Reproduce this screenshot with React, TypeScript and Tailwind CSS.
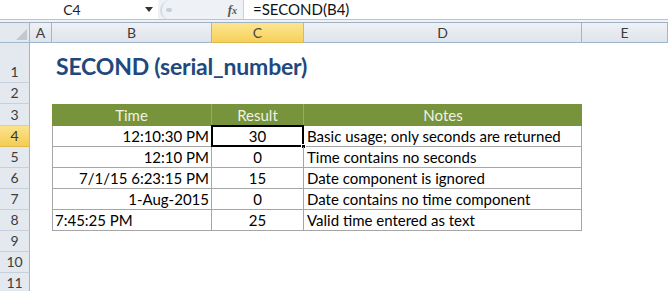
import React from 'react'

// Excel 2010 style sheet: SECOND function example

const cols = [
  { key: 'A', w: 'w-[22px]' },
  { key: 'B', w: 'w-[160px]' },
  { key: 'C', w: 'w-[92px]' },
  { key: 'D', w: 'w-[278px]' },
  { key: 'E', w: 'w-[86px]' },
]

const rows = [
  { time: '12:10:30 PM', result: '30', note: 'Basic usage; only seconds are returned', left: false },
  { time: '12:10 PM', result: '0', note: 'Time contains no seconds', left: false },
  { time: '7/1/15 6:23:15 PM', result: '15', note: 'Date component is ignored', left: false },
  { time: '1-Aug-2015', result: '0', note: 'Date contains no time component', left: false },
  { time: '7:45:25 PM', result: '25', note: 'Valid time entered as text', left: true },
]

function RowHead({ n, h = 'h-[21px]', active = false }: { n: number; h?: string; active?: boolean }) {
  return (
    <div
      className={`${h} w-[30px] shrink-0 flex items-end justify-center pb-[1px] border-b border-r text-[14px] leading-[18px] ${
        active
          ? 'bg-gradient-to-b from-[#fbe38c] to-[#f5cc52] border-b-[#e0b850] border-r-[#e0b850] text-[#333]'
          : 'bg-[#e4e9f0] border-b-[#c6cfda] border-r-[#9eb6ce] text-[#3c3c3c]'
      }`}
    >
      {n}
    </div>
  )
}

export default function App() {
  return (
    <div className="w-[668px] h-[291px] overflow-hidden bg-white font-['Lato',sans-serif] text-black">
      {/* Formula bar */}
      <div className="flex h-[20px] border-b border-[#b8c4d2]">
        <div className="w-[140px] bg-white flex items-center justify-center pl-[4px] text-[14px] text-[#222]">C4</div>
        <div className="w-[18px] bg-white flex items-center justify-center">
          <svg width="8" height="5" viewBox="0 0 8 5">
            <path d="M0 0 L8 0 L4 5 Z" fill="#333" />
          </svg>
        </div>
        <div className="w-[85px] bg-[#eef1f5] flex items-center">
          <div className="ml-[2px] w-[16px] h-[20px] rounded-l-full border-l-2 border-[#d6dbe2] flex items-center justify-center">
            <div className="w-[6px] h-[4px] rounded-full bg-[#c8ced6]" />
          </div>
          <span className="ml-auto mr-[6px] font-['Liberation_Serif',serif] italic font-bold text-[13px] text-[#555]">
            f<span className="text-[10px]">x</span>
          </span>
        </div>
        <div className="flex-1 bg-white border-l border-[#c8d0da] flex items-center pl-[9px] text-[15px] text-[#111]">
          =SECOND(B4)
        </div>
      </div>
      <div className="h-[3px] bg-[#eef1f5] border-b border-[#9fb0c2]" />

      {/* Column headers */}
      <div className="flex h-[20px]">
        <div className="w-[30px] shrink-0 bg-[#e4e9f0] border-r border-b border-[#9eb6ce] flex items-end justify-end p-[2px]">
          <svg width="11" height="11" viewBox="0 0 11 11">
            <path d="M11 0 L11 11 L0 11 Z" fill="#c2c8d0" />
          </svg>
        </div>
        {cols.map((c) => (
          <div
            key={c.key}
            className={`${c.w} shrink-0 flex items-center justify-center border-r border-b text-[14px] ${
              c.key === 'C'
                ? 'bg-gradient-to-b from-[#fce690] to-[#f7d05a] border-[#e0b850] text-[#444]'
                : 'bg-gradient-to-b from-[#eef1f5] to-[#dfe4ea] border-[#9eb6ce] text-[#3c3c3c]'
            }`}
          >
            {c.key}
          </div>
        ))}
      </div>

      {/* Row 1 - title */}
      <div className="flex">
        <RowHead n={1} h="h-[40px]" />
        <div className="w-[22px]" />
        <div className="flex items-end pl-[4px] pb-[0px] text-[23px] font-bold text-[#1f497d] tracking-[-0.2px] whitespace-nowrap">
          SECOND (serial_number)
        </div>
      </div>

      {/* Row 2 */}
      <div className="flex">
        <RowHead n={2} />
      </div>

      {/* Row 3 - table header */}
      <div className="flex">
        <RowHead n={3} h="h-[22px]" />
        <div className="w-[22px]" />
        <div className="w-[160px] h-[22px] bg-[#77933c] text-[#eef2e4] text-[15px] flex items-center justify-center border-r border-[#94ab66]">Time</div>
        <div className="w-[92px] h-[22px] bg-[#77933c] text-[#eef2e4] text-[15px] flex items-center justify-center border-r border-[#94ab66]">Result</div>
        <div className="w-[278px] h-[22px] bg-[#77933c] text-[#eef2e4] text-[15px] flex items-center justify-center">Notes</div>
      </div>

      {/* Rows 4-8 */}
      {rows.map((r, i) => (
        <div key={i} className="flex">
          <RowHead n={i + 4} active={i === 0} />
          <div className="w-[22px]" />
          <div
            className={`w-[160px] h-[21px] border-l border-b border-r border-[#a6a6a6] flex items-center text-[15px] whitespace-nowrap ${
              r.left ? 'justify-start pl-[2px]' : 'justify-end pr-[2px]'
            }`}
          >
            {r.time}
          </div>
          <div className="relative w-[92px] h-[21px] border-b border-r border-[#a6a6a6] flex items-center justify-center text-[15px]">
            {r.result}
            {i === 0 && (
              <div className="absolute -left-[1px] -top-[1px] -right-[1px] -bottom-[1px] border-2 border-black">
                <div className="absolute -right-[4px] -bottom-[4px] w-[5px] h-[5px] bg-black border border-white" />
              </div>
            )}
          </div>
          <div className="w-[278px] h-[21px] border-b border-r border-[#a6a6a6] flex items-center pl-[3px] text-[15px] whitespace-nowrap">
            {r.note}
          </div>
        </div>
      ))}

      {/* Rows 9-11 */}
      {[9, 10, 11].map((n) => (
        <div key={n} className="flex">
          <RowHead n={n} />
        </div>
      ))}
    </div>
  )
}
